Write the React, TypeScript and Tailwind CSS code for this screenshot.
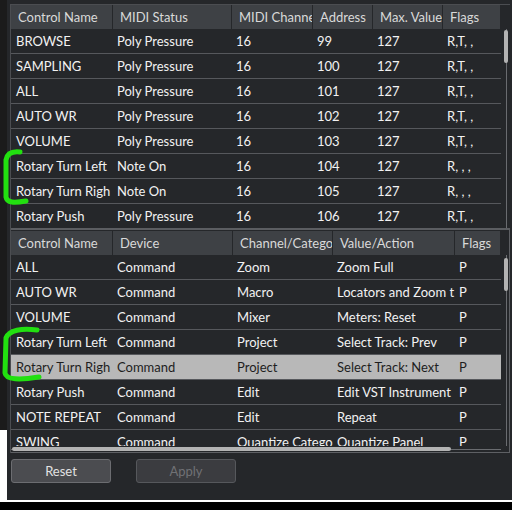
import React from "react";

const TOP_COLS = [102, 119, 81, 60, 70, 58];
const BOTTOM_COLS = [102, 120, 100, 122, 46];

// labels as the grid shows them (columns are too narrow for the full text)
const TOP_HEAD = ["Control Name", "MIDI Status", "MIDI Channe", "Address", "Max. Value", "Flags"];
const BOTTOM_HEAD = ["Control Name", "Device", "Channel/Categor", "Value/Action", "Flags"];

const TOP_ROWS = [
  ["BROWSE", "Poly Pressure", "16", "99", "127", "R,T, ,"],
  ["SAMPLING", "Poly Pressure", "16", "100", "127", "R,T, ,"],
  ["ALL", "Poly Pressure", "16", "101", "127", "R,T, ,"],
  ["AUTO WR", "Poly Pressure", "16", "102", "127", "R,T, ,"],
  ["VOLUME", "Poly Pressure", "16", "103", "127", "R,T, ,"],
  ["Rotary Turn Left", "Note On", "16", "104", "127", "R, , ,"],
  ["Rotary Turn Righ", "Note On", "16", "105", "127", "R, , ,"],
  ["Rotary Push", "Poly Pressure", "16", "106", "127", "R,T, ,"],
];

const BOTTOM_ROWS = [
  ["ALL", "Command", "Zoom", "Zoom Full", "P"],
  ["AUTO WR", "Command", "Macro", "Locators and Zoom t", "P"],
  ["VOLUME", "Command", "Mixer", "Meters: Reset", "P"],
  ["Rotary Turn Left", "Command", "Project", "Select Track: Prev", "P"],
  ["Rotary Turn Righ", "Command", "Project", "Select Track: Next", "P"],
  ["Rotary Push", "Command", "Edit", "Edit VST Instrument", "P"],
  ["NOTE REPEAT", "Command", "Edit", "Repeat", "P"],
  ["SWING", "Command", "Quantize Catego", "Quantize Panel", "P"],
];

const SELECTED = 4;

function HeaderRow({ cols, labels }: { cols: number[]; labels: string[] }) {
  return (
    <div className="flex h-[24px] shrink-0 gap-px">
      {labels.map((l, i) => (
        <div
          key={l}
          style={{ width: cols[i] - 1 }}
          className="flex items-center overflow-hidden whitespace-nowrap bg-[#3e4145] pl-[7px] text-[#d9d9d9]"
        >
          {l}
        </div>
      ))}
    </div>
  );
}

function BodyRow({ cols, cells, selected }: { cols: number[]; cells: string[]; selected?: boolean }) {
  return (
    <div
      className={
        "flex h-[25px] shrink-0 border-b border-[#56585c] " +
        (selected ? "bg-[#b8b8b8] text-[#1e1e1e]" : "text-[#f2f2f2]")
      }
    >
      {cells.map((c, i) => (
        <div
          key={i}
          style={{ width: cols[i] }}
          className="flex items-center overflow-hidden whitespace-nowrap pl-[4px] first:pl-[5px]"
        >
          {c}
        </div>
      ))}
    </div>
  );
}

export default function App() {
  return (
    <div
      className="relative flex h-[510px] w-[512px] flex-col overflow-hidden bg-black text-[13px] leading-none"
      style={{ fontFamily: "Lato, 'Noto Sans', sans-serif" }}
    >
      <div className="flex h-[500px] shrink-0">
        {/* window edge */}
        <div className="flex w-[7px] shrink-0 flex-col">
          <div className="h-[430px] bg-[#1b1b1b]" />
          <div className="flex-1 bg-white" />
        </div>

        <div className="flex flex-1 flex-col bg-[#25272a] pl-[3px] pt-[4px]">
          {/* tables frame */}
          <div className="flex w-[500px] flex-col border-l border-t border-[#4b4d51]">
            {/* top table */}
            <div className="flex h-[223px] overflow-hidden">
              <div className="flex w-[490px] flex-col">
                <HeaderRow cols={TOP_COLS} labels={TOP_HEAD} />
                {TOP_ROWS.map((r, i) => (
                  <BodyRow key={i} cols={TOP_COLS} cells={r} />
                ))}
              </div>
              <div className="relative w-[9px]">
                <div className="absolute bottom-0 left-[5px] top-[24px] w-px bg-[#6a6c70]" />
                <div className="absolute left-[3px] top-[25px] h-[33px] w-[4px] rounded-full bg-[#b3b3b3]" />
              </div>
            </div>

            <div className="h-[2px] bg-[#5b5d61]" />

            {/* bottom table */}
            <div className="flex h-[223px] flex-col border-b border-r border-[#5e6064] pt-px">
              <div className="flex">
                <HeaderRow cols={BOTTOM_COLS} labels={BOTTOM_HEAD} />
              </div>
              <div className="flex h-[191px] overflow-hidden">
                <div className="flex w-[490px] flex-col">
                  {BOTTOM_ROWS.map((r, i) => (
                    <BodyRow key={i} cols={BOTTOM_COLS} cells={r} selected={i === SELECTED} />
                  ))}
                </div>
                <div className="relative w-[8px]">
                  <div className="absolute bottom-0 left-[5px] top-0 w-px bg-[#6a6c70]" />
                  <div className="absolute left-[3px] top-[3px] h-[33px] w-[4px] rounded-full bg-[#b3b3b3]" />
                </div>
              </div>
              <div className="relative h-[6px] w-[490px]">
                <div className="absolute left-0 right-0 top-[3px] h-px bg-[#6a6c70]" />
                <div className="absolute left-px top-[1px] h-[4px] w-[439px] rounded-full bg-[#b3b3b3]" />
              </div>
            </div>
          </div>

          {/* buttons */}
          <div className="flex gap-[25px] pl-[1px] pt-[6px]">
            <button className="flex h-[24px] w-[100px] items-center justify-center rounded-[3px] border border-[#6c6d71] bg-[#4b4c50] text-[#e2e2e2]">
              Reset
            </button>
            <button className="flex h-[24px] w-[100px] items-center justify-center rounded-[3px] border border-[#56585c] bg-[#3b3c40] text-[#707175]">
              Apply
            </button>
          </div>
        </div>
      </div>
      <div className="h-[2px] bg-white" />

      {/* hand-drawn annotation marks */}
      <svg className="pointer-events-none absolute left-0 top-0" width="512" height="510">
        <path
          d="M20 152 C 11 151, 7 154, 6 160 L 6 197 C 7 203, 14 203, 26 201"
          fill="none"
          stroke="#22e010"
          strokeWidth="5"
          strokeLinecap="round"
        />
        <path
          d="M37 330 C 22 328, 9 330, 6 338 L 5 373 C 6 380, 20 380, 39 377"
          fill="none"
          stroke="#22e010"
          strokeWidth="5"
          strokeLinecap="round"
        />
      </svg>
    </div>
  );
}
